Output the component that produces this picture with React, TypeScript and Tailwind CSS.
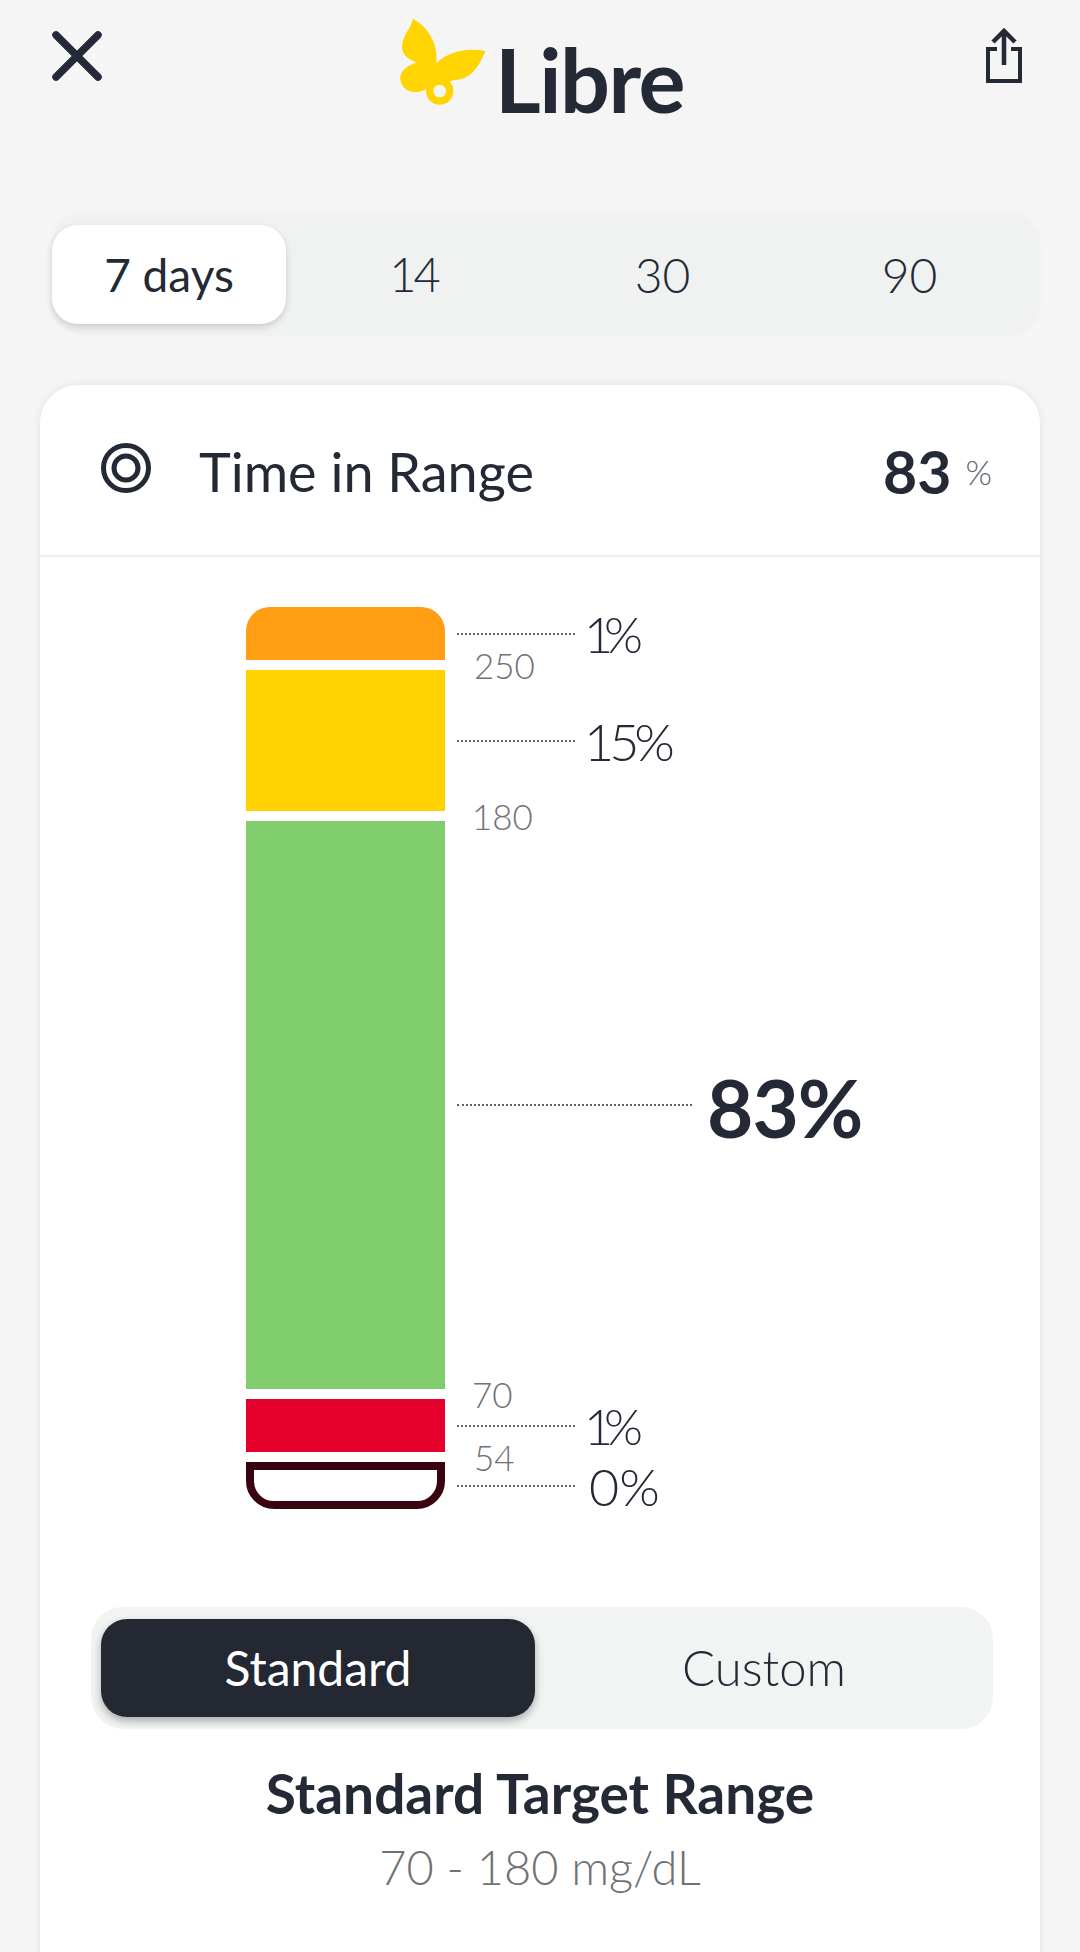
import React from "react";

const ink = "#242a35";

function Logo() {
  return (
    <svg width="90" height="90" viewBox="110 50 270 270" className="shrink-0">
      <path d="M155 55C200 80 232 130 225 190C250 160 310 140 372 152C352 200 330 238 275 240L240 255L195 265C165 285 120 275 117 235C115 215 135 195 165 187C140 175 120 165 122 135C125 105 148 85 155 55Z" fill="#ffd400" />
      <circle cx="235" cy="272" r="30" fill="#f5f5f6" stroke="#ffd400" strokeWidth="22" />
    </svg>
  );
}

function Row({ h, className, label, labelClass, line, threshold }: { h: string; className: string; label: string; labelClass: string; line: string; threshold?: React.ReactNode }) {
  return (
    <div className={`relative flex items-center ${h}`}>
      <div className={`w-[199px] shrink-0 self-stretch ${className}`} />
      <div className={`ml-[12px] border-t-2 border-dotted border-[#5f6368] ${line}`} />
      <span className={labelClass}>{label}</span>
      {threshold}
    </div>
  );
}

function Threshold({ text, className }: { text: string; className: string }) {
  return <span className={`absolute font-light text-[35px] leading-none text-[#6f7276] ${className}`}>{text}</span>;
}

export default function App() {
  return (
    <div className="h-[1952px] w-[1080px] overflow-hidden bg-[#f5f5f6] font-['Lato',sans-serif]" style={{ color: ink }}>
      <header className="flex h-[212px] items-start justify-between pl-[52px] pr-[58px]">
        <svg width="50" height="50" viewBox="0 0 50 50" className="mt-[31px]">
          <path d="M4 4L46 46M46 4L4 46" stroke={ink} strokeWidth="7.5" strokeLinecap="round" />
        </svg>
        <div className="mt-[17px] -ml-[6px] flex items-start">
          <Logo />
          <span className="ml-[7px] mt-[12px] text-[88px] font-bold leading-[100px] tracking-[-1.5px]">Libre</span>
        </div>
        <svg width="36" height="56" viewBox="0 0 36 56" className="mt-[27px]">
          <path d="M18 38V4M7 15L18 4L29 15" stroke={ink} strokeWidth="4.5" fill="none" />
          <path d="M11 22H2V54H34V22H25" stroke={ink} strokeWidth="4" fill="none" />
        </svg>
      </header>

      <div className="ml-[52px] flex h-[123px] w-[988px] items-start rounded-[32px] bg-[#f0f2f2] pt-[13px] shadow-[0_0_6px_rgba(0,0,0,0.02)]">
        <div className="flex h-[99px] w-[234px] items-center justify-center rounded-[26px] bg-white text-[46px] shadow-[0_3px_7px_rgba(0,0,0,0.16)]">7 days</div>
        <div className="ml-[4px] flex h-[99px] w-[247px] items-center justify-center text-[47px] font-light tracking-[-3px]">14</div>
        <div className="ml-[2px] flex h-[99px] w-[247px] items-center justify-center text-[48px] font-light">30</div>
        <div className="flex h-[99px] w-[247px] items-center justify-center text-[48px] font-light">90</div>
      </div>

      <main className="ml-[40px] mt-[50px] h-[1600px] w-[1000px] rounded-t-[38px] bg-white shadow-[0_0_8px_rgba(0,0,0,0.08)]">
        <div className="flex h-[172px] items-center border-b-2 border-[#eeeeee] pl-[60px] pr-[48px]">
          <svg width="52" height="52" viewBox="0 0 52 52" className="-mt-[4px] shrink-0">
            <circle cx="26" cy="26" r="22.5" fill="none" stroke={ink} strokeWidth="5" />
            <circle cx="26" cy="26" r="12" fill="none" stroke={ink} strokeWidth="5" />
          </svg>
          <span className="ml-[47px] mt-[3px] text-[54px] leading-none">Time in Range</span>
          <span className="ml-auto mt-[3px] text-[59px] font-bold leading-none">83</span>
          <span className="ml-[14px] mt-[3px] text-[34px] font-light leading-none text-[#5f6368]">%</span>
        </div>

        <section className="flex flex-col gap-[10px] pl-[206px] pt-[50px]">
          <Row h="h-[53px]" className="rounded-t-[24px] bg-[#ff9e13]" label="1%" labelClass="ml-[9px] mt-[1px] font-light text-[50px] leading-none tracking-[-9px]" line="w-[118px]"
            threshold={<Threshold text="250" className="left-[228px] top-[41px]" />} />
          <Row h="h-[141px]" className="bg-[#ffd200]" label="15%" labelClass="ml-[9px] mt-[1px] font-light text-[52px] leading-none tracking-[-5px]" line="w-[118px]"
            threshold={<Threshold text="180" className="left-[226px] top-[129px]" />} />
          <Row h="h-[568px]" className="bg-[#7fcd6d]" label="83%" labelClass="ml-[15px] mt-[3px] font-bold text-[80px] leading-none tracking-[-1px]" line="w-[235px]"
            threshold={<Threshold text="70" className="left-[226px] top-[556px]" />} />
          <Row h="h-[53px]" className="bg-[#e4002b]" label="1%" labelClass="ml-[9px] mt-[1px] font-light text-[50px] leading-none tracking-[-9px]" line="w-[118px]"
            threshold={<Threshold text="54" className="left-[228px] top-[41px]" />} />
          <Row h="h-[47px]" className="rounded-b-[28px] border-[8px] border-[#3a0310] bg-white" label="0%" labelClass="ml-[14px] mt-[1px] font-light text-[52px] leading-none" line="w-[118px]" />
        </section>

        <div className="ml-[51px] mt-[98px] flex h-[122px] w-[902px] items-start rounded-[32px] bg-[#f2f4f4] pl-[10px] pt-[12px]">
          <div className="flex h-[98px] w-[434px] items-center justify-center rounded-[26px] bg-[#232833] text-[48px] text-white shadow-[0_4px_8px_rgba(0,0,0,0.3)]">Standard</div>
          <div className="flex h-[98px] flex-1 items-center justify-center text-[49px] font-light">Custom</div>
        </div>

        <h2 className="mt-[28px] text-center text-[55px] font-bold leading-[72px]">Standard Target Range</h2>
        <p className="mt-[9px] text-center text-[47px] font-light leading-[58px] text-[#6f7276]">70 - 180 mg/dL</p>
      </main>
    </div>
  );
}
